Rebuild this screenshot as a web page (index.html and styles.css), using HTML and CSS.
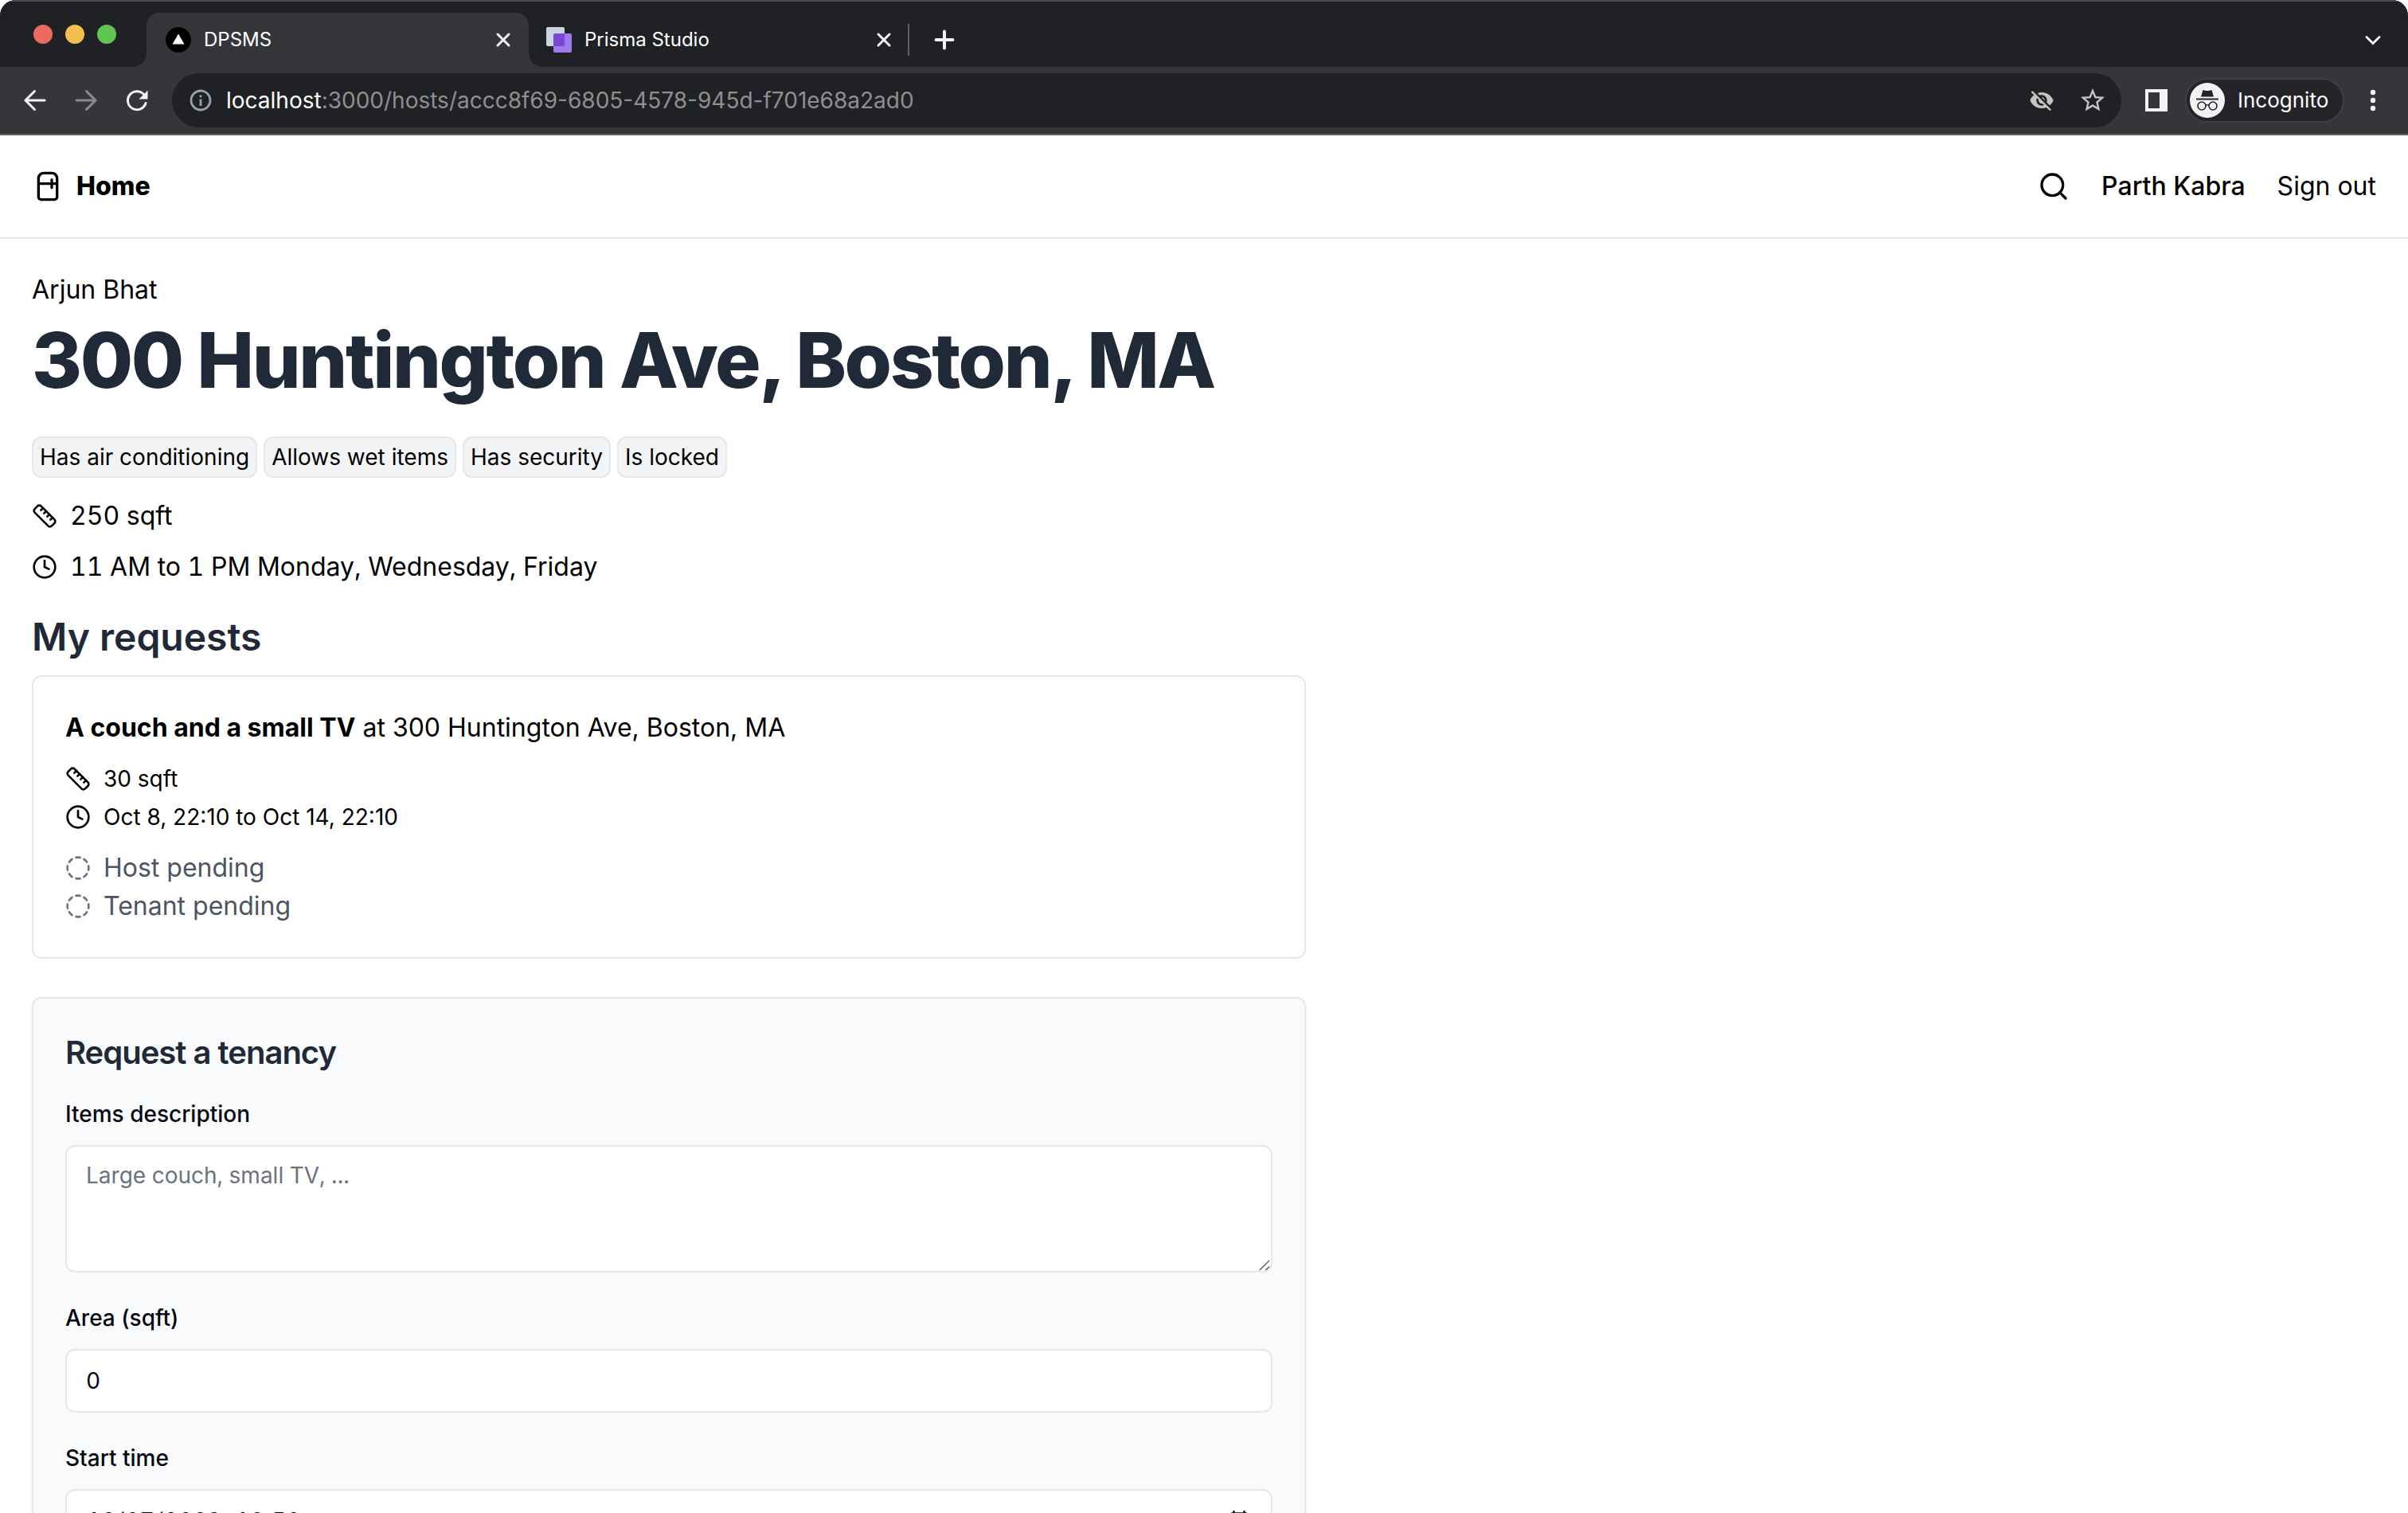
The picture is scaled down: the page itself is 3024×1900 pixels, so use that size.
FILE: index.html
```html
<!DOCTYPE html>
<html lang="en">
<head>
<meta charset="utf-8">
<title>DPSMS</title>
<meta name="viewport" content="width=device-width, initial-scale=1">
<link rel="stylesheet" href="styles.css">
</head>
<body>
<svg class="sprite" aria-hidden="true">
  <symbol id="ruler" viewBox="0 0 24 24"><path d="M21.3 15.3a2.4 2.4 0 0 1 0 3.4l-2.6 2.6a2.4 2.4 0 0 1-3.4 0L2.7 8.7a2.41 2.41 0 0 1 0-3.4l2.6-2.6a2.41 2.41 0 0 1 3.4 0Z"/><path d="m14.5 12.5 2-2M11.5 9.5l2-2M8.5 6.5l2-2M17.5 15.5l2-2"/></symbol>
  <symbol id="clock" viewBox="0 0 24 24"><circle cx="12" cy="12" r="10"/><path d="M12 6v6l4 2"/></symbol>
  <symbol id="dashed" viewBox="0 0 24 24"><path d="M10.1 2.18a9.93 9.93 0 0 1 3.8 0M17.6 3.71a9.95 9.95 0 0 1 2.69 2.7M21.82 10.1a9.93 9.93 0 0 1 0 3.8M20.29 17.6a9.95 9.95 0 0 1-2.7 2.69M13.9 21.82a9.94 9.94 0 0 1-3.8 0M6.4 20.29a9.95 9.95 0 0 1-2.69-2.7M2.18 13.9a9.93 9.93 0 0 1 0-3.8M3.71 6.4a9.95 9.95 0 0 1 2.7-2.69"/></symbol>
  <symbol id="close" viewBox="0 0 32 32"><path d="M9 9l14 14M23 9L9 23"/></symbol>
</svg>
<div class="window">
  <div class="chrome">
    <div class="tab-strip">
      <div class="lights"><span class="light light-red"></span><span class="light light-yellow"></span><span class="light light-green"></span></div>
      <div class="tab tab-active">
        <svg class="favicon" viewBox="0 0 32 32"><circle cx="16" cy="16" r="16" fill="#000"/><path d="M16 8.500l7.500 13h-15z" fill="#fff"/></svg>
        <span class="tab-title">DPSMS</span>
        <button class="tab-close" aria-label="Close DPSMS"><svg class="stroke" width="32" height="32"><use href="#close"/></svg></button>
      </div>
      <div class="tab tab-idle">
        <svg class="favicon" viewBox="0 0 32 32"><rect width="23" height="24" rx="2" fill="#cbd5e0"/><rect x="9" y="8" width="23" height="24" rx="2" fill="#9f7aea"/><path d="M9 10a2 2 0 0 1 2-2h12v14a2 2 0 0 1-2 2H9z" fill="#7c45d6"/></svg>
        <span class="tab-title">Prisma Studio</span>
        <button class="tab-close" aria-label="Close Prisma Studio"><svg class="stroke" width="32" height="32"><use href="#close"/></svg></button>
      </div>
      <span class="tab-divider"></span>
      <button class="new-tab" aria-label="New tab"><svg class="stroke plus" width="32" height="32" viewBox="0 0 32 32"><path d="M16 5.500v21M5.500 16h21"/></svg></button>
      <button class="tool tab-search" aria-label="Search tabs"><svg class="stroke" width="32" height="32" viewBox="0 0 32 32"><path d="M8 12.500l8 8 8-8"/></svg></button>
    </div>
    <div class="toolbar">
      <button class="tool" aria-label="Back"><svg class="stroke" width="32" height="32" viewBox="0 0 32 32"><path d="M28 16H4M15.500 4.500L4 16l11.500 11.500"/></svg></button>
      <button class="tool tool-off" aria-label="Forward" disabled><svg class="stroke" width="32" height="32" viewBox="0 0 32 32"><path d="M4 16h24M16.500 4.500L28 16 16.500 27.500"/></svg></button>
      <button class="tool" aria-label="Reload"><svg class="stroke" width="32" height="32" viewBox="0 0 32 32"><path d="M27 19.500A11.500 11.500 0 1 1 24.500 8.500"/><path d="M29.500 3.500v11h-11z" fill="#f1f3f4" stroke="none"/></svg></button>
      <div class="omnibox">
        <svg class="info" width="32" height="32" viewBox="0 0 32 32"><circle cx="16" cy="16" r="12" fill="none" stroke="#9aa0a6" stroke-width="2.800"/><path d="M14.600 14.500h2.800V23h-2.800zM14.600 9.500h2.800v2.800h-2.800z" fill="#9aa0a6"/></svg>
        <span class="url"><span class="url-host">localhost</span>:3000/hosts/accc8f69-6805-4578-945d-f701e68a2ad0</span>
        <button class="tool" aria-label="Third-party cookies blocked"><svg width="32" height="32" viewBox="0 0 24 24" fill="#c4c4c4"><path d="M12 7c2.760 0 5 2.240 5 5 0 .65-.13 1.260-.36 1.830l2.920 2.920c1.510-1.260 2.700-2.890 3.430-4.750-1.730-4.390-6-7.500-11-7.500-1.400 0-2.740.25-3.980.7l2.160 2.160C10.740 7.130 11.350 7 12 7zM2 4.270l2.280 2.280.46.46C3.080 8.300 1.780 10.020 1 12c1.730 4.390 6 7.500 11 7.500 1.550 0 3.030-.3 4.380-.84l.42.42L19.730 22 21 20.730 3.270 3 2 4.270zM7.530 9.800l1.550 1.550c-.05.21-.08.43-.08.65 0 1.660 1.340 3 3 3 .22 0 .44-.03.65-.08l1.550 1.550c-.67.33-1.410.53-2.200.53-2.760 0-5-2.240-5-5 0-.79.2-1.530.53-2.200zm4.310-.78l3.150 3.150.02-.16c0-1.660-1.340-3-3-3l-.17.01z"/></svg></button>
        <button class="tool" aria-label="Bookmark this tab"><svg width="36" height="36" viewBox="0 0 24 24" fill="#c4c4c4"><path d="M22 9.240l-7.190-.62L12 2 9.190 8.630 2 9.240l5.460 4.730L5.820 21 12 17.270 18.180 21l-1.630-7.030L22 9.240zM12 15.400l-3.760 2.270 1-4.280-3.320-2.880 4.380-.38L12 6.100l1.710 4.040 4.380.38-3.320 2.880 1 4.280L12 15.400z"/></svg></button>
      </div>
      <button class="tool" aria-label="Side panel"><svg width="28" height="28" viewBox="0 0 28 28"><path d="M0 0h28v28H0zM4 4v20h14V4z" fill="#f1f3f4" fill-rule="evenodd"/></svg></button>
      <button class="profile">
        <svg width="44" height="44" viewBox="0 0 44 44"><circle cx="22" cy="22" r="22" fill="#f1f3f4"/><path d="M14 17.500l2.500-8.500c3.500 1.200 7.500 1.200 11 0l2.500 8.500zM8 19.500h28v2H8z" fill="#242328"/><g fill="none" stroke="#242328" stroke-width="1.600"><circle cx="15" cy="29" r="5"/><circle cx="29" cy="29" r="5"/><path d="M20 28.500c1-1 3-1 4 0"/></g></svg>
        <span>Incognito</span>
      </button>
      <button class="tool" aria-label="Menu"><svg width="32" height="32" viewBox="0 0 32 32" fill="#f1f3f4"><circle cx="16" cy="6" r="3.200"/><circle cx="16" cy="16" r="3.200"/><circle cx="16" cy="26" r="3.200"/></svg></button>
    </div>
  </div>
  <div class="page">
    <header class="site-header">
      <a class="home" href="#"><svg class="icon-large" viewBox="0 0 24 24"><path d="M5 6a4 4 0 0 1 4-4h6a4 4 0 0 1 4 4v14a2 2 0 0 1-2 2H7a2 2 0 0 1-2-2V6ZM5 10h14M15 7v6"/></svg>Home</a>
      <nav class="site-nav">
        <a href="#" aria-label="Search"><svg class="icon-large" viewBox="0 0 24 24"><circle cx="11" cy="11" r="8"/><path d="m21 21-4.300-4.300"/></svg></a>
        <a class="user" href="#">Parth Kabra</a>
        <a href="#">Sign out</a>
      </nav>
    </header>
    <main class="content">
      <p class="owner">Arjun Bhat</p>
      <h1 class="address">300 Huntington Ave, Boston, MA</h1>
      <ul class="tags">
        <li class="tag">Has air conditioning</li>
        <li class="tag">Allows wet items</li>
        <li class="tag">Has security</li>
        <li class="tag">Is locked</li>
      </ul>
      <div class="facts">
        <p class="row"><svg class="icon"><use href="#ruler"/></svg>250 sqft</p>
        <p class="row"><svg class="icon"><use href="#clock"/></svg>11 AM to 1 PM Monday, Wednesday, Friday</p>
      </div>
      <h2 class="section-title">My requests</h2>
      <article class="card request">
        <p><strong>A couch and a small TV</strong> at 300 Huntington Ave, Boston, MA</p>
        <div class="small">
          <p class="row"><svg class="icon"><use href="#ruler"/></svg>30 sqft</p>
          <p class="row"><svg class="icon"><use href="#clock"/></svg>Oct 8, 22:10 to Oct 14, 22:10</p>
        </div>
        <div class="status">
          <p class="row"><svg class="icon"><use href="#dashed"/></svg>Host pending</p>
          <p class="row"><svg class="icon"><use href="#dashed"/></svg>Tenant pending</p>
        </div>
      </article>
      <form class="card tenancy">
        <h3 class="form-title">Request a tenancy</h3>
        <div class="field"><label for="items">Items description</label><textarea class="control area" id="items" placeholder="Large couch, small TV, ..."></textarea></div>
        <div class="field"><label for="sqft">Area (sqft)</label><input class="control" id="sqft" type="text" inputmode="numeric" value="0"></div>
        <div class="field"><label for="start">Start time</label><input class="control" id="start" type="datetime-local" value="2023-10-07T22:50"></div>
      </form>
    </main>
  </div>
</div>
</body>
</html>
```
FILE: styles.css
```css
* { box-sizing: border-box; margin: 0; padding: 0; }
body { font: 32px/48px Inter, "Liberation Sans", sans-serif; color: #000; background: #fff; }
button { font: inherit; color: inherit; background: none; border: 0; }
a { color: inherit; text-decoration: none; }
ul { list-style: none; }
svg { display: block; flex: none; }
.sprite { display: none; }

/* Browser window */
.window { display: flex; flex-direction: column; height: 100vh; overflow: hidden; }
.chrome { flex: none; border-radius: 20px 20px 0 0; overflow: hidden; background: #35363a; border-bottom: 2px solid #5f6064; color: #fff; }
.stroke { fill: none; stroke: #f1f3f4; stroke-width: 3; stroke-linecap: round; }
.tab-strip { display: flex; align-items: flex-end; height: 84px; background: #202124; border-top: 2px solid #4a4b4e; }
.lights { display: flex; align-items: center; gap: 16px; width: 184px; height: 82px; padding-left: 42px; }
.light { width: 24px; height: 24px; border-radius: 50%; }
.light-red { background: #ed6a5e; }
.light-yellow { background: #f5bf4f; }
.light-green { background: #61c554; }
.tab { position: relative; display: flex; align-items: center; gap: 16px; height: 68px; font-size: 24px; }
.tab-active { width: 480px; padding: 0 16px 0 24px; background: #35363a; border-radius: 16px 16px 0 0; }
.tab-idle { width: 476px; padding: 0 14px 0 22px; }
.tab-active::before, .tab-active::after { content: ""; position: absolute; bottom: 0; width: 16px; height: 16px; }
.tab-active::before { right: 100%; background: radial-gradient(circle at 0 0, transparent 15px, #35363a 16px); }
.tab-active::after { left: 100%; background: radial-gradient(circle at 100% 0, transparent 15px, #35363a 16px); }
.favicon { width: 32px; height: 32px; }
.tab-title { flex: 1; }
.tab-divider { width: 2px; height: 40px; margin-bottom: 14px; background: #5f6064; }
.new-tab { display: grid; place-items: center; width: 48px; height: 68px; margin-left: 20px; }
.plus { stroke-width: 4; }
.tab-search { margin: 0 12px 0 auto; }
.tool { display: grid; place-items: center; flex: none; width: 64px; height: 68px; }
.tool-off { opacity: .45; }
.toolbar { display: flex; align-items: center; height: 84px; padding: 0 12px; }
.omnibox { display: flex; align-items: center; flex: 1; gap: 16px; height: 68px; margin: 0 12px; padding: 0 4px 0 20px; border-radius: 34px; background: #202124; font-size: 28px; }
.omnibox .tool + .tool { margin-left: -16px; }
.url { flex: 1; color: #8f8f8f; }
.url-host { color: #fff; }
.profile { display: flex; align-items: center; gap: 16px; width: 200px; height: 56px; margin: 0 4px; padding-left: 4px; border: 2px solid #3f4045; border-radius: 28px; background: #242328; font-size: 26px; }

/* Site */
.page { flex: 1; overflow: hidden; }
.icon, .icon-large { fill: none; stroke: currentColor; stroke-width: 2; stroke-linecap: round; stroke-linejoin: round; }
.icon { width: 32px; height: 32px; }
.icon-large { width: 40px; height: 40px; }
.site-header { display: flex; align-items: center; justify-content: space-between; height: 130px; padding: 0 40px; border-bottom: 2px solid #e5e7eb; }
.home { display: flex; align-items: center; gap: 16px; font-weight: 800; }
.site-nav { display: flex; align-items: center; gap: 40px; }
.user { font-weight: 500; }
.content { padding: 40px; }
.address { margin-top: 16px; font-size: 96px; line-height: 96px; font-weight: 800; letter-spacing: -0.025em; color: #1f2937; }
.tags { display: flex; gap: 8px; margin-top: 48px; }
.tag { padding: 4px 8px; border: 2px solid #e5e7eb; border-radius: 12px; background: #f3f4f6; font-size: 28px; line-height: 40px; }
.row { display: flex; align-items: center; gap: 16px; }
.facts { display: grid; gap: 16px; margin-top: 24px; font-variant-numeric: tabular-nums; }
.section-title { margin-top: 32px; font-size: 48px; line-height: 64px; font-weight: 600; color: #1f2937; }
.card { max-width: 1600px; padding: 40px; border: 2px solid #e5e7eb; border-radius: 12px; }
.request { display: grid; gap: 16px; margin-top: 16px; }
.request strong { font-weight: 700; }
.small { font-size: 28px; }
.status { color: #4b5563; }
.status .icon { color: #6b7280; }
.tenancy { margin-top: 48px; background: #f9fafb; box-shadow: 0 2px 4px rgba(0, 0, 0, .05); }
.form-title { margin-bottom: 24px; font-size: 40px; line-height: 56px; font-weight: 600; letter-spacing: -0.025em; color: #1f2937; }
.field + .field { margin-top: 32px; }
.field label { font-size: 28px; line-height: 28px; font-weight: 500; color: #030712; }
.control { display: block; width: 100%; height: 80px; margin-top: 16px; padding: 16px 24px; border: 2px solid #e5e7eb; border-radius: 12px; background: #fff; color: #030712; font: 28px/40px Inter, "Liberation Sans", sans-serif; font-variant-numeric: tabular-nums; }
.area { height: 160px; resize: vertical; }
.area::-webkit-resizer { background: url("data:image/svg+xml,%3Csvg xmlns='http://www.w3.org/2000/svg' viewBox='0 0 16 16'%3E%3Cpath d='M1 15 14 2M9 15l5-5' fill='none' stroke='%23555' stroke-width='1.500'/%3E%3C/svg%3E") center / 100% 100% no-repeat; }
.control::placeholder { color: #6b7280; }
.control::-webkit-datetime-edit-ampm-field { display: none; }
```
